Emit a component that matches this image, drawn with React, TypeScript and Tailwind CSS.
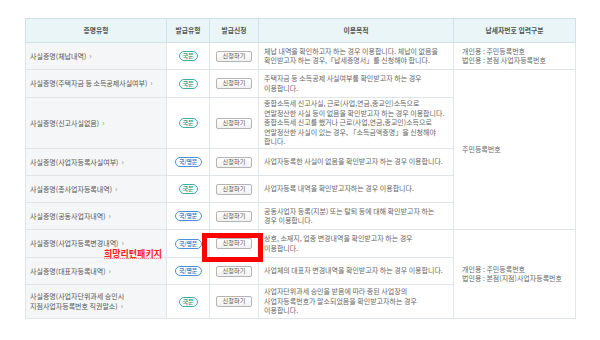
import React from "react";

type Lang = "ko" | "both";

interface Row {
  name: React.ReactNode;
  lang: Lang;
  purpose: React.ReactNode;
  h: string;
}

const rows: Row[] = [
  {
    name: "사실증명(체납내역)",
    lang: "ko",
    purpose: (
      <>
        체납 내역을 확인하고자 하는 경우 이용합니다. 체납이 없음을
        <br />
        확인받고자 하는 경우,「납세증명서」를 신청해야 합니다.
      </>
    ),
    h: "h-[27px]",
  },
  {
    name: "사실증명(주택자금 등 소득공제사실여부)",
    lang: "ko",
    purpose: (
      <>
        주택자금 등 소득공제 사실여부를 확인받고자 하는 경우
        <br />
        이용합니다.
      </>
    ),
    h: "h-[28px]",
  },
  {
    name: "사실증명(신고사실없음)",
    lang: "ko",
    purpose: (
      <>
        종합소득세 신고사실, 근로(사업,연금,종교인)소득으로
        <br />
        연말정산한 사실 등이 없음을 확인받고자 하는 경우 이용합니다.
        <br />
        종합소득세 신고를 했거나 근로(사업,연금,종교인)소득으로
        <br />
        연말정산한 사실이 있는 경우, 「소득금액증명」을 신청해야
        <br />
        합니다.
      </>
    ),
    h: "h-[51px]",
  },
  {
    name: "사실증명(사업자등록사실여부)",
    lang: "both",
    purpose: "사업자등록한 사실이 없음을 확인받고자 하는 경우 이용합니다.",
    h: "h-[27px]",
  },
  {
    name: "사실증명(총사업자등록내역)",
    lang: "ko",
    purpose: "사업자등록 내역을 확인받고자하는 경우 이용합니다.",
    h: "h-[27px]",
  },
  {
    name: "사실증명(공동사업자내역)",
    lang: "both",
    purpose: (
      <>
        공동사업자 등록(지분) 또는 탈퇴 등에 대해 확인받고자 하는
        <br />
        경우 이용합니다.
      </>
    ),
    h: "h-[27px]",
  },
  {
    name: "사실증명(사업자등록변경내역)",
    lang: "both",
    purpose: (
      <>
        상호, 소재지, 업종 변경내역을 확인받고자 하는 경우
        <br />
        이용합니다.
      </>
    ),
    h: "h-[28px]",
  },
  {
    name: "사실증명(대표자등록내역)",
    lang: "both",
    purpose: "사업체의 대표자 변경내역을 확인받고자 하는 경우 이용합니다.",
    h: "h-[27px]",
  },
  {
    name: (
      <>
        사실증명(사업자단위과세 승인시
        <br />
        지점사업자등록번호 직권말소)
      </>
    ),
    lang: "ko",
    purpose: (
      <>
        사업자단위과세 승인을 받음에 따라 종된 사업장의
        <br />
        사업자등록번호가 말소되었음을 확인받고자하는 경우
        <br />
        이용합니다.
      </>
    ),
    h: "h-[34px]",
  },
];

const LangBadge = ({ lang }: { lang: Lang }) =>
  lang === "ko" ? (
    <span className="inline-flex h-[10px] w-[19px] items-center justify-center rounded-full border border-[#3fae9c] text-[5.8px] font-bold leading-none text-[#2f9c88]">
      국문
    </span>
  ) : (
    <span className="inline-flex h-[10px] w-[27px] items-center justify-center rounded-full border border-[#4d8fd6] text-[5.8px] font-bold leading-none text-[#3a7cc4]">
      국/영문
    </span>
  );

const ApplyButton = () => (
  <button className="inline-flex h-[11px] w-[36px] items-center justify-center rounded-[2px] border border-[#b4b4b4] bg-gradient-to-b from-white to-[#f1f1f1] text-[6.2px] leading-none text-[#555]">
    신청하기
  </button>
);

const Chevron = () => <span className="ml-[3px] text-[7.5px] text-[#888]">›</span>;

const App = () => {
  const cell = "border border-[#dfe5e8]";
  const head = "border border-[#cfe2e5] bg-[#e9f5f6] text-[6.8px] font-bold text-[#555]";

  return (
    <div
      className="relative h-[340px] w-[600px] overflow-hidden bg-white pl-[25px] pt-[18px]"
      style={{ fontFamily: '"Noto Sans CJK KR", "Noto Sans", sans-serif' }}
    >
      <table className="w-[550px] table-fixed border-collapse text-[7px] leading-[9.4px] text-[#666]">
        <colgroup>
          <col className="w-[141px]" />
          <col className="w-[43px]" />
          <col className="w-[49px]" />
          <col className="w-[195px]" />
          <col className="w-[122px]" />
        </colgroup>
        <thead>
          <tr className="h-[24px] border-b border-[#bcd8dc]">
            <th className={head}>증명유형</th>
            <th className={head}>발급유형</th>
            <th className={head}>발급신청</th>
            <th className={head}>이용목적</th>
            <th className={head}>납세자번호 입력구분</th>
          </tr>
        </thead>
        <tbody>
          {rows.map((r, i) => (
            <tr key={i} className={r.h}>
              <td className={`${cell} bg-[#f4f6f7] px-[4px] text-[#555]`}>
                {r.name}
                <Chevron />
              </td>
              <td className={`${cell} text-center`}>
                <LangBadge lang={r.lang} />
              </td>
              <td className={`${cell} text-center`}>
                <ApplyButton />
              </td>
              <td className={`${cell} whitespace-nowrap px-[5px]`}>{r.purpose}</td>
              {i === 0 && (
                <td className={`${cell} px-[8px]`}>
                  개인용 : 주민등록번호
                  <br />
                  법인용 : 본점 사업자등록번호
                </td>
              )}
              {i === 1 && (
                <td rowSpan={5} className={`${cell} px-[8px]`}>
                  주민등록번호
                </td>
              )}
              {i === 6 && (
                <td rowSpan={3} className={`${cell} px-[8px]`}>
                  개인용 : 주민등록번호
                  <br />
                  법인용 : 본점(지점)사업자등록번호
                </td>
              )}
            </tr>
          ))}
        </tbody>
      </table>

      {/* annotation overlay */}
      <div className="absolute left-[202px] top-[233px] h-[29px] w-[61px] border-[5px] border-[#ff0000]" />
      <span className="absolute left-[104px] top-[249px] text-[9px] font-semibold leading-[9px] text-[#ff1a1a] underline decoration-dotted decoration-[#ff8080]">
        희망리턴패키지
      </span>
    </div>
  );
};

export default App;
